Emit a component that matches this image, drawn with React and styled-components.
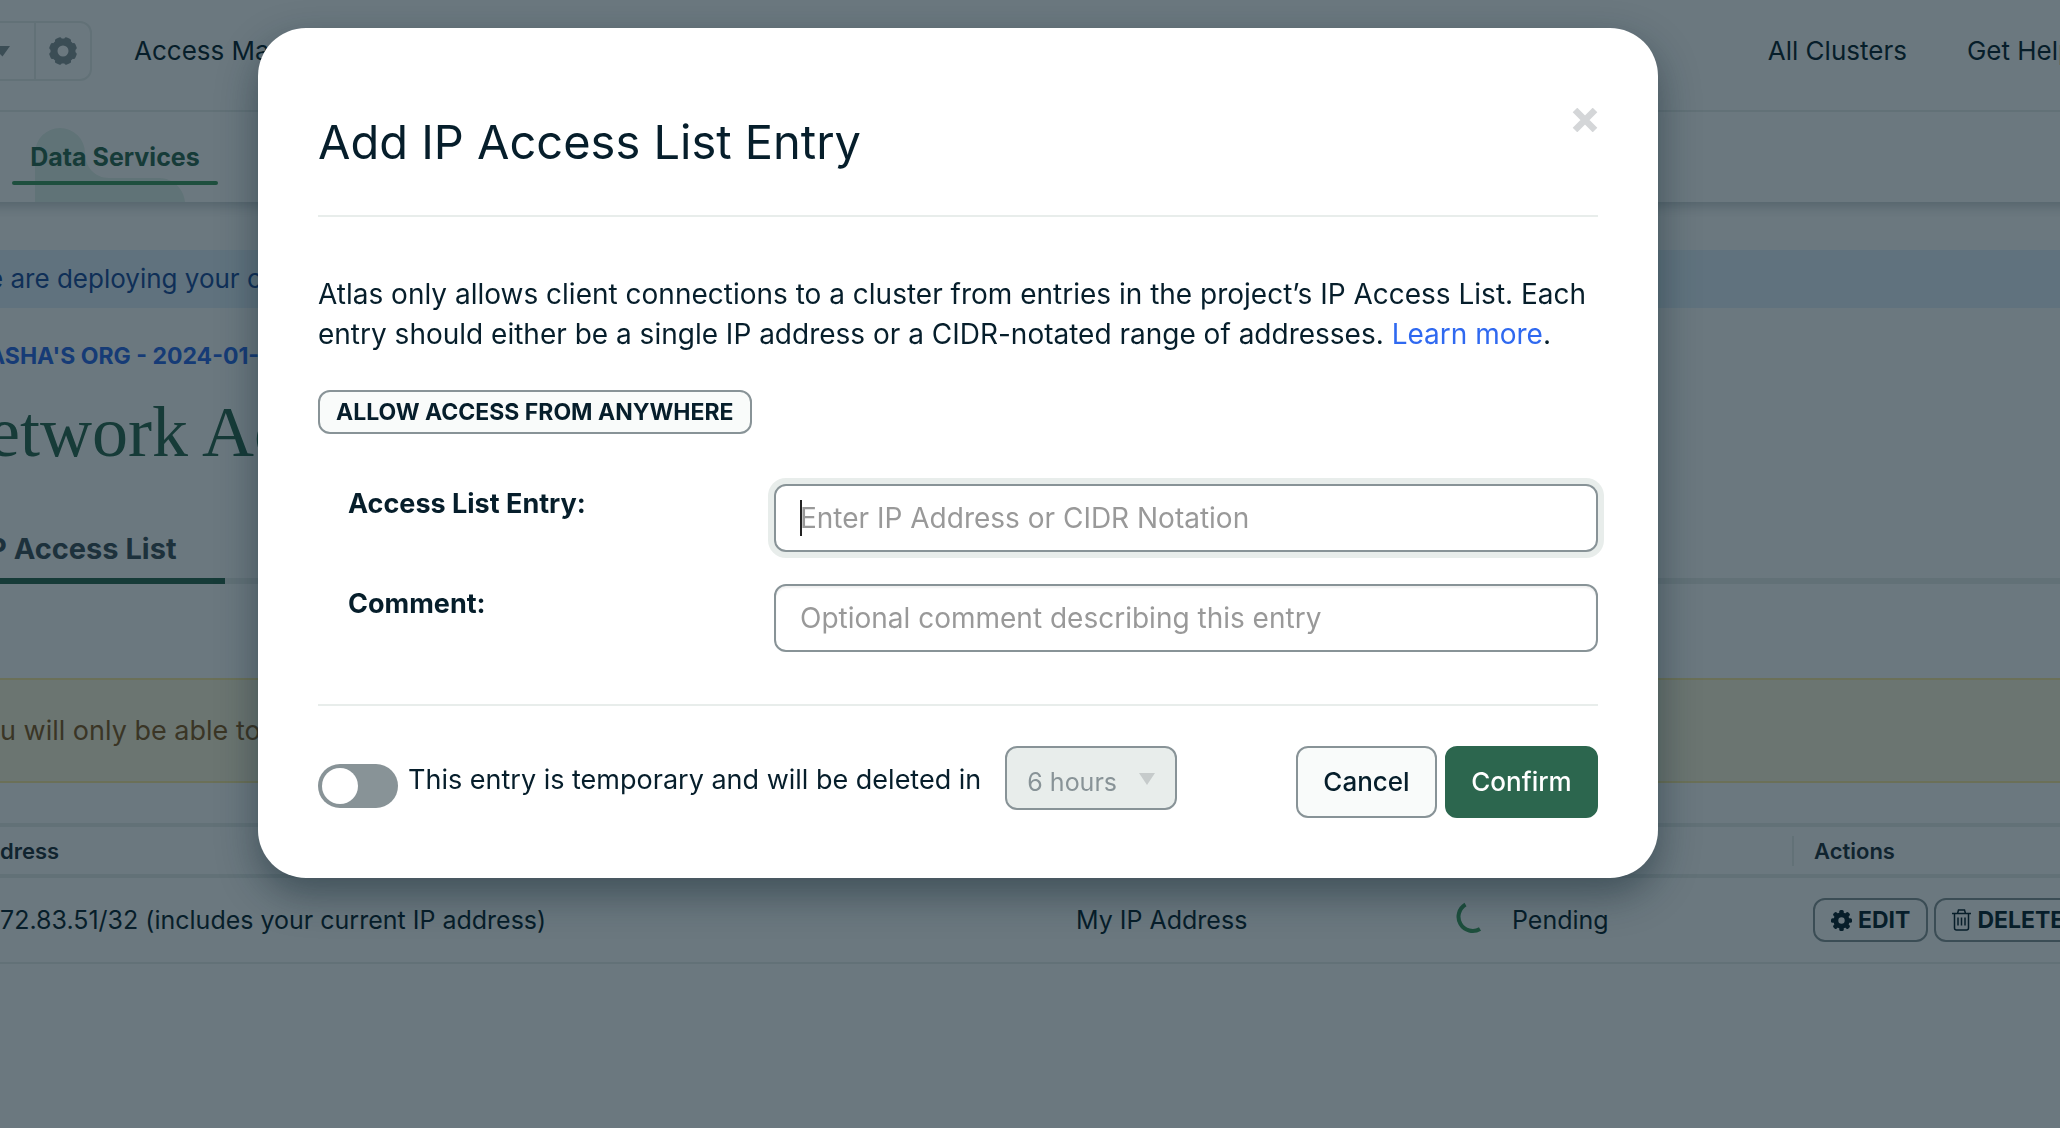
import React from "react";
import styled, { createGlobalStyle } from "styled-components";

const ink = "#061e2b";
const line = "#e8edeb";

const Global = createGlobalStyle`
  *, *::before, *::after { box-sizing: border-box; }
  body { margin: 0; background: #fff; color: ${ink}; font-family: Inter, "Liberation Sans", sans-serif; font-size: 26px; line-height: 40px; overflow: hidden; }
  button, input, select { font: inherit; color: inherit; }
  a { color: inherit; text-decoration: none; }
  h1, h2, p { margin: 0; font-weight: 400; }
`;

const Shell = styled.div`
  position: relative;
  min-height: 100vh;
  overflow: hidden;
  white-space: nowrap;
`;
const TopBar = styled.header`
  display: flex;
  align-items: center;
  justify-content: space-between;
  height: 112px;
  padding-bottom: 8px;
  border-bottom: 2px solid ${line};
`;
const TopGroup = styled.div`
  display: flex;
  align-items: center;
  gap: 60px;
  margin-right: ${(p) => (p.$bleed ? "-14px" : "0")};
`;
const ProjectPicker = styled.div`
  display: flex;
  height: 60px;
  width: 92px;
  margin-right: -18px;
  border: 2px solid ${line};
  border-left: 0;
  border-radius: 0 12px 12px 0;
`;
const PickerButton = styled.button`
  display: flex;
  align-items: center;
  justify-content: ${(p) => (p.$main ? "flex-start" : "center")};
  flex: ${(p) => (p.$main ? "0 0 36px" : "1")};
  padding: 0;
  border: 0;
  border-right: ${(p) => (p.$main ? `2px solid ${line}` : "0")};
  background: none;
  color: #889397;
`;
const ServiceNav = styled.nav`
  display: flex;
  height: 90px;
  margin: 0 -24px;
  padding: 0 36px;
  box-shadow: 0 10px 12px -6px rgba(6, 30, 43, 0.24);
`;
const ServiceTab = styled.a`
  position: relative;
  display: flex;
  align-items: center;
  width: 206px;
  justify-content: center;
  font-weight: 700;
  font-size: 25px;
  color: #2c664e;
  &::after {
    content: "";
    position: absolute;
    left: 0;
    right: 0;
    top: 69px;
    height: 4px;
    border-radius: 2px;
    background: #3f9a5c;
  }
  svg { position: absolute; left: 23px; bottom: 0; }
  span { position: relative; }
`;
const InfoBanner = styled.div`
  margin-top: 48px;
  height: 58px;
  line-height: 58px;
  background: #e4f1fc;
  color: #1a4a9c;
`;
const Bleed = styled.div`
  margin-left: -12px;
`;
const Crumb = styled.a`
  display: block;
  margin-top: 28px;
  font-weight: 700;
  font-size: 23px;
  color: #2b68e8;
`;
const PageTitle = styled.h1`
  margin-top: 12px;
  font-family: "Liberation Serif", serif;
  font-size: 72px;
  line-height: 88px;
  color: #2c664e;
`;
const TabBar = styled.div`
  display: flex;
  margin-top: 32px;
  border-bottom: 6px solid ${line};
`;
const Tab = styled.a`
  width: 237px;
  height: 76px;
  margin-bottom: -6px;
  padding-top: 12px;
  line-height: 58px;
  border-bottom: 6px solid #2c664e;
  font-weight: 700;
  font-size: 29px;
  color: #3d4f58;
`;
const Warning = styled.div`
  margin-top: 94px;
  height: 105px;
  line-height: 102px;
  border: solid #ffec9e;
  border-width: 2px 0;
  background: #fef7db;
  color: #86581e;
  font-size: 27px;
`;
const Table = styled.table`
  width: calc(100% + 20px);
  margin-top: 40px;
  border-collapse: collapse;
  table-layout: fixed;
  text-align: left;
`;
const Th = styled.th`
  height: 51px;
  padding: 0;
  border: solid ${line};
  border-width: 4px 0;
  font-size: 22px;
  line-height: 30px;
  font-weight: 600;
  color: #1c2d38;
  width: ${(p) => p.$w || "auto"};
`;
const Divided = styled.div`
  padding-left: 20px;
  border-left: 2px solid ${line};
`;
const Td = styled.td`
  height: 87px;
  padding: 0;
  border-bottom: 2px solid ${line};
  font-size: 25px;
`;
const Inline = styled.div`
  display: flex;
  align-items: center;
  gap: ${(p) => p.$gap};
  padding-left: ${(p) => p.$pad || "0"};
`;
const SmallButton = styled.button`
  display: inline-flex;
  align-items: center;
  gap: 6px;
  height: 44px;
  padding: 0 16px;
  border: 2px solid #889397;
  border-radius: 12px;
  background: #f9fbfa;
  font-weight: 700;
  font-size: 23px;
  svg { flex: none; }
`;
const RowButton = styled(SmallButton)`
  background: none;
`;

const Backdrop = styled.div`
  position: fixed;
  inset: 0;
  display: flex;
  justify-content: center;
  align-items: flex-start;
  padding: 28px 144px 0 0;
  background: rgba(8, 30, 42, 0.6);
`;
const Dialog = styled.section`
  width: 1400px;
  max-width: 100%;
  padding: 80px 60px 60px;
  border-radius: 48px;
  background: #fff;
  box-shadow: 0 16px 40px rgba(8, 30, 42, 0.45);
`;
const DialogHead = styled.div`
  display: flex;
  justify-content: space-between;
  align-items: flex-start;
  height: 109px;
  border-bottom: 2px solid ${line};
`;
const DialogTitle = styled.h2`
  font-size: 47px;
  line-height: 68px;
`;
const CloseButton = styled.button`
  display: flex;
  padding: 0;
  border: 0;
  background: none;
  color: #d4d6d8;
`;
const Copy = styled.p`
  margin: 57px 0 36px;
  font-size: 28px;
  a { color: #2f69f0; }
`;
const Fields = styled.div`
  display: grid;
  gap: 32px;
  margin: 50px 0 52px;
`;
const Field = styled.div`
  display: grid;
  grid-template-columns: 456px 1fr;
  label { padding-left: 30px; font-weight: 700; font-size: 27px; }
`;
const InputBox = styled.div`
  position: relative;
  display: flex;
`;
const TextCursor = styled.span`
  position: absolute;
  left: 26px;
  top: 16px;
  width: 2px;
  height: 36px;
  background: #222;
`;
const Input = styled.input`
  flex: 1;
  min-width: 0;
  height: 68px;
  padding: 0 24px;
  border: 2px solid #889397;
  border-radius: 12px;
  font-size: 28px;
  outline: none;
  caret-color: transparent;
  box-shadow: inset 0 2px 2px rgba(0, 0, 0, 0.06);
  &::placeholder { color: #999; opacity: 1; }
  &:focus { box-shadow: 0 0 0 6px ${line}; }
`;
const DialogFoot = styled.div`
  display: flex;
  align-items: flex-start;
  padding-top: 40px;
  border-top: 2px solid ${line};
`;
const Toggle = styled.input`
  appearance: none;
  flex: none;
  width: 80px;
  height: 44px;
  margin: 18px 10px 0 0;
  padding: 4px;
  border-radius: 22px;
  background: #889397;
  &::before {
    content: "";
    display: block;
    width: 36px;
    height: 36px;
    border-radius: 50%;
    background: #fff;
  }
`;
const ToggleLabel = styled.label`
  margin-right: 24px;
  line-height: 68px;
  font-size: 27px;
`;
const SelectWrap = styled.div`
  position: relative;
  svg { position: absolute; right: 22px; top: 27px; pointer-events: none; }
`;
const Select = styled.select`
  appearance: none;
  width: 172px;
  height: 64px;
  padding: 8px 20px 0;
  border: 2px solid #889397;
  border-radius: 12px;
  background: ${line};
  color: #889397;
  opacity: 1;
  font-size: 25px;
`;
const Actions = styled.div`
  display: flex;
  gap: 8px;
  margin-left: auto;
`;
const Button = styled.button`
  height: 72px;
  width: ${(p) => (p.$primary ? "153px" : "141px")};
  padding: 0;
  border: 2px solid ${(p) => (p.$primary ? "#2c664e" : "#889397")};
  border-radius: 12px;
  background: ${(p) => (p.$primary ? "#2c664e" : "#f9fbfa")};
  color: ${(p) => (p.$primary ? "#fff" : ink)};
  font-size: 26px;
  font-weight: 500;
`;

const Gear = ({ size, soft }) => (
  <svg width={size} height={size} viewBox="0 0 28 28" aria-hidden="true">
    <circle cx="14" cy="14" r={soft ? 9 : 7.5} fill="none" stroke="currentColor" strokeWidth={soft ? 7 : 6.5} />
    {[0, 45, 90, 135].map((a) => (
      <g key={a} transform={`rotate(${soft ? a + 22.5 : a} 14 14)`} fill="currentColor">
        <rect x={soft ? 10.5 : 11} y="0" width={soft ? 7 : 6} height="6" rx="2" />
        <rect x={soft ? 10.5 : 11} y="22" width={soft ? 7 : 6} height="6" rx="2" />
      </g>
    ))}
  </svg>
);
const Caret = () => (
  <svg width="16" height="12" viewBox="0 0 16 12" aria-hidden="true">
    <path d="M0 0h16L8 12z" fill="#c6cbcb" />
  </svg>
);
const CaretEdge = () => (
  <svg width="10" height="11" viewBox="0 0 10 11" aria-hidden="true">
    <path d="M0 0h10L2.500 10.500 0 8z" fill="#889397" />
  </svg>
);
const Trash = () => (
  <svg width="19" height="22" viewBox="0 0 19 22" fill="none" stroke="currentColor" strokeWidth="1.500" aria-hidden="true">
    <path d="M0 4.500h19M2.500 4.500v14.500a2 2 0 0 0 2 2h10a2 2 0 0 0 2-2V4.500M5.500 4.500l1-3.500h6l1 3.500M6 8.500v8M9.500 8.500v8M13 8.500v8" />
  </svg>
);
const Spinner = () => (
  <svg width="26" height="36" viewBox="0 0 26 36" fill="none" aria-hidden="true">
    <path d="M9.500 2.500A14 14 0 0 0 24 27" stroke="#3f9a5c" strokeWidth="4" />
  </svg>
);

export default function App() {
  return (
    <>
      <Global />
      <Shell>
        <TopBar>
          <TopGroup>
            <ProjectPicker>
              <PickerButton $main aria-label="Choose project"><CaretEdge /></PickerButton>
              <PickerButton aria-label="Project settings"><Gear size={28} soft /></PickerButton>
            </ProjectPicker>
            <a href="#access">Access Manager</a>
          </TopGroup>
          <TopGroup $bleed>
            <a href="#clusters">All Clusters</a>
            <a href="#help">Get Help</a>
          </TopGroup>
        </TopBar>
        <ServiceNav>
          <ServiceTab href="#data">
            <svg width="150" height="74" viewBox="0 0 150 74" aria-hidden="true">
              <path d="M0 74V25a25 25 0 0 1 50 0c0 14 10 25 24 25h50c14 0 25 11 26 24z" fill="#e3f2ea" />
            </svg>
            <span>Data Services</span>
          </ServiceTab>
        </ServiceNav>
        <Bleed>
          <InfoBanner>e are deploying your changes</InfoBanner>
          <Crumb href="#org">ASHA'S ORG - 2024-01-18</Crumb>
          <PageTitle>etwork Access</PageTitle>
          <TabBar><Tab href="#list">P Access List</Tab></TabBar>
        </Bleed>
        <Warning>u will only be able to connect to your cluster</Warning>
        <Table>
          <thead>
            <tr>
              <Th $w="1076px">dress</Th>
              <Th $w="380px" aria-label="Comment" />
              <Th $w="336px" aria-label="Status" />
              <Th><Divided>Actions</Divided></Th>
            </tr>
          </thead>
          <tbody>
            <tr>
              <Td>72.83.51/32 (includes your current IP address)</Td>
              <Td>My IP Address</Td>
              <Td><Inline $gap="30px"><Spinner />Pending</Inline></Td>
              <Td>
                <Inline $gap="6px" $pad="21px">
                  <RowButton><Gear size={21} />EDIT</RowButton>
                  <RowButton><Trash />DELETE</RowButton>
                </Inline>
              </Td>
            </tr>
          </tbody>
        </Table>
      </Shell>
      <Backdrop>
        <Dialog role="dialog" aria-modal="true" aria-labelledby="dialog-title">
          <DialogHead>
            <DialogTitle id="dialog-title">Add IP Access List Entry</DialogTitle>
            <CloseButton aria-label="Close">
              <svg width="26" height="24" viewBox="0 0 26 24" stroke="currentColor" strokeWidth="6.500" aria-hidden="true">
                <path d="M3 2l20 20M23 2L3 22" />
              </svg>
            </CloseButton>
          </DialogHead>
          <Copy>
            Atlas only allows client connections to a cluster from entries in the project’s IP Access List. Each
            entry should either be a single IP address or a CIDR-notated range of addresses. <a href="#learn">Learn more</a>.
          </Copy>
          <SmallButton>ALLOW ACCESS FROM ANYWHERE</SmallButton>
          <Fields>
            <Field>
              <label htmlFor="entry">Access List Entry:</label>
              <InputBox>
                <Input id="entry" autoFocus placeholder="Enter IP Address or CIDR Notation" />
                <TextCursor />
              </InputBox>
            </Field>
            <Field>
              <label htmlFor="comment">Comment:</label>
              <InputBox>
                <Input id="comment" placeholder="Optional comment describing this entry" />
              </InputBox>
            </Field>
          </Fields>
          <DialogFoot>
            <Toggle id="temporary" type="checkbox" role="switch" />
            <ToggleLabel htmlFor="temporary">This entry is temporary and will be deleted in</ToggleLabel>
            <SelectWrap>
              <Select disabled aria-label="Delete after" defaultValue="6"><option value="6">6 hours</option></Select>
              <Caret />
            </SelectWrap>
            <Actions>
              <Button>Cancel</Button>
              <Button $primary>Confirm</Button>
            </Actions>
          </DialogFoot>
        </Dialog>
      </Backdrop>
    </>
  );
}
